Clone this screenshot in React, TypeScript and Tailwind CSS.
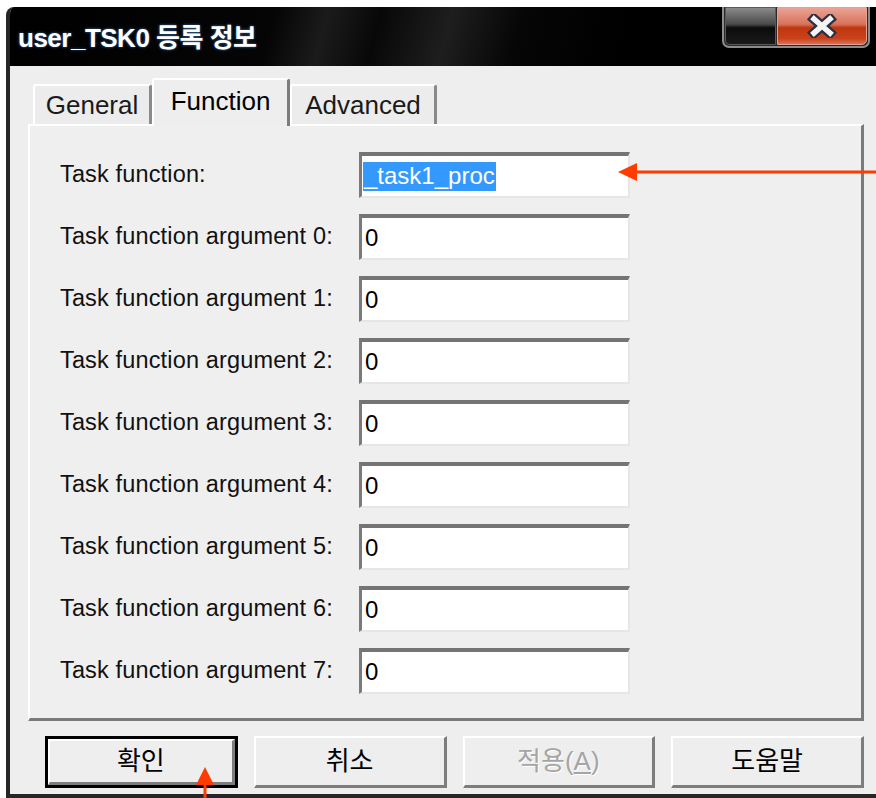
import React from "react";

const labelFont = { fontFamily: '"Liberation Sans", "Noto Sans CJK KR", sans-serif' };

const rows = [
  { label: "Task function:", value: "_task1_proc", selected: true },
  { label: "Task function argument 0:", value: "0" },
  { label: "Task function argument 1:", value: "0" },
  { label: "Task function argument 2:", value: "0" },
  { label: "Task function argument 3:", value: "0" },
  { label: "Task function argument 4:", value: "0" },
  { label: "Task function argument 5:", value: "0" },
  { label: "Task function argument 6:", value: "0" },
  { label: "Task function argument 7:", value: "0" },
];

const CloseGroup = () => (
  <div className="ml-auto mr-[12px] flex h-[41px] w-[148px] rounded-b-[7px] border-x-2 border-b-2 border-[#8c8c8c] bg-[#2a2a2a] p-[1px] pt-0">
    {/* dark caption button */}
    <div className="w-[51px] h-full rounded-bl-[5px] border border-[#5a5a5a] bg-[linear-gradient(180deg,#8a8a8a_0%,#4a4a4a_45%,#0c0c0c_55%,#1a1a1a_100%)]" />
    {/* red close button */}
    <div className="ml-[1px] flex flex-1 items-center justify-center rounded-br-[5px] border border-[#e8a090] bg-[linear-gradient(180deg,#e9a394_0%,#d9735c_45%,#c0360f_55%,#c9421a_85%,#d8705a_100%)]">
      <svg width="32" height="24" viewBox="0 0 32 24">
        <path d="M8 5 L24 19 M24 5 L8 19" stroke="#2c2f45" strokeWidth="10" strokeLinecap="square" />
        <path d="M8 5 L24 19 M24 5 L8 19" stroke="#f4f4f4" strokeWidth="5.5" strokeLinecap="square" />
      </svg>
    </div>
  </div>
);

const Tab = ({ label, width, active }: { label: string; width: number; active?: boolean }) => (
  <div
    className={
      active
        ? "relative z-10 -mb-[2px] flex h-[48px] items-center justify-center rounded-t-[3px] border-l-2 border-t-2 border-r-[3px] border-white border-r-[#7d7d7d] bg-[#eeeeee] pb-[4px] text-[26px] text-black"
        : "flex h-[40px] items-center justify-center rounded-t-[3px] border-l-2 border-t-2 border-r-[3px] border-white border-r-[#8a8a8a] bg-[#ececec] text-[26px] text-[#1a1a1a]"
    }
    style={{ width }}
  >
    {label}
  </div>
);

const Field = ({ value, selected }: { value: string; selected?: boolean }) => (
  <div className="flex h-[46px] w-[271px] items-center border-l-[3px] border-t-4 border-b-2 border-r-2 border-l-[#7a7a7a] border-t-[#747474] border-b-[#e6e6e6] border-r-[#e6e6e6] bg-white">
    {selected ? (
      <span className="ml-[1px] flex h-[29px] items-center bg-[#3399ff] px-[1px] text-[24px] text-white">{value}</span>
    ) : (
      <span className="ml-[3px] text-[24px] text-black">{value}</span>
    )}
  </div>
);

const Button = ({ children, primary, disabled }: { children: React.ReactNode; primary?: boolean; disabled?: boolean }) => (
  <div
    className={
      primary
        ? "h-[52px] w-[193px] border-[3px] border-black"
        : "h-[52px] w-[193px]"
    }
  >
    <div className="flex h-full w-full items-center justify-center border-l-2 border-t-2 border-b-[3px] border-r-[3px] border-white border-b-[#7d7d7d] border-r-[#7d7d7d] bg-[#eeeeee] text-[26px]">
      <span className={disabled ? "text-[#a5a5a5] [text-shadow:1px_1px_0_#ffffff]" : "text-black"}>{children}</span>
    </div>
  </div>
);

export default function App() {
  return (
    <div className="relative h-[798px] w-[876px] overflow-hidden bg-white" style={labelFont}>
      <div className="ml-[6px] mt-[7px] flex h-[791px] w-[876px] flex-col overflow-hidden rounded-tl-[8px] border-b-4 border-l-4 border-[#262626] bg-[#eeeeee]">
        {/* caption bar */}
        <div className="flex h-[59px] shrink-0 items-start bg-[linear-gradient(105deg,#000000_0%,#050505_30%,#1b1b1b_36%,#080808_42%,#1e1e1e_50%,#060606_58%,#000000_70%,#000000_100%)]">
          <div className="self-center pl-[8px] pt-[4px] text-[26px] font-bold tracking-[-0.5px] text-white [text-shadow:0_0_3px_#3a6fb0]">
            user_TSK0 등록 정보
          </div>
          <CloseGroup />
        </div>

        {/* dialog body */}
        <div className="flex flex-1 flex-col pl-[18px] pr-[18px] pt-[12px]">
          <div className="flex h-[46px] items-end pl-[5px]">
            <Tab label="General" width={119} />
            <Tab label="Function" width={138} active />
            <Tab label="Advanced" width={147} />
          </div>

          <div className="flex h-[597px] flex-col gap-[16px] border-l-2 border-t-2 border-b-[3px] border-r-[3px] border-white border-b-[#7a7a7a] border-r-[#7a7a7a] bg-[#efefef] pl-[30px] pt-[26px]">
            {rows.map((row, i) => (
              <div key={i} className="flex h-[46px] items-center">
                <div className="w-[299px] text-[23.5px] tracking-[0.15px] text-[#111111]">{row.label}</div>
                <Field value={row.value} selected={row.selected} />
              </div>
            ))}
          </div>

          <div className="ml-[17px] mt-[15px] flex gap-[16px]">
            <Button primary>확인</Button>
            <Button>취소</Button>
            <Button disabled>
              적용(<span className="underline underline-offset-2">A</span>)
            </Button>
            <Button>도움말</Button>
          </div>
        </div>
      </div>

      {/* red annotation arrows */}
      <svg className="pointer-events-none absolute left-0 top-0" width="876" height="798">
        <line x1="634" y1="172" x2="876" y2="172" stroke="#ff3b00" strokeWidth="3" />
        <polygon points="618,172 637,163 637,181" fill="#ff3b00" />
        <line x1="205" y1="782" x2="205" y2="798" stroke="#ff3b00" strokeWidth="3" />
        <polygon points="205,767 196,785 214,785" fill="#ff3b00" />
      </svg>
    </div>
  );
}
